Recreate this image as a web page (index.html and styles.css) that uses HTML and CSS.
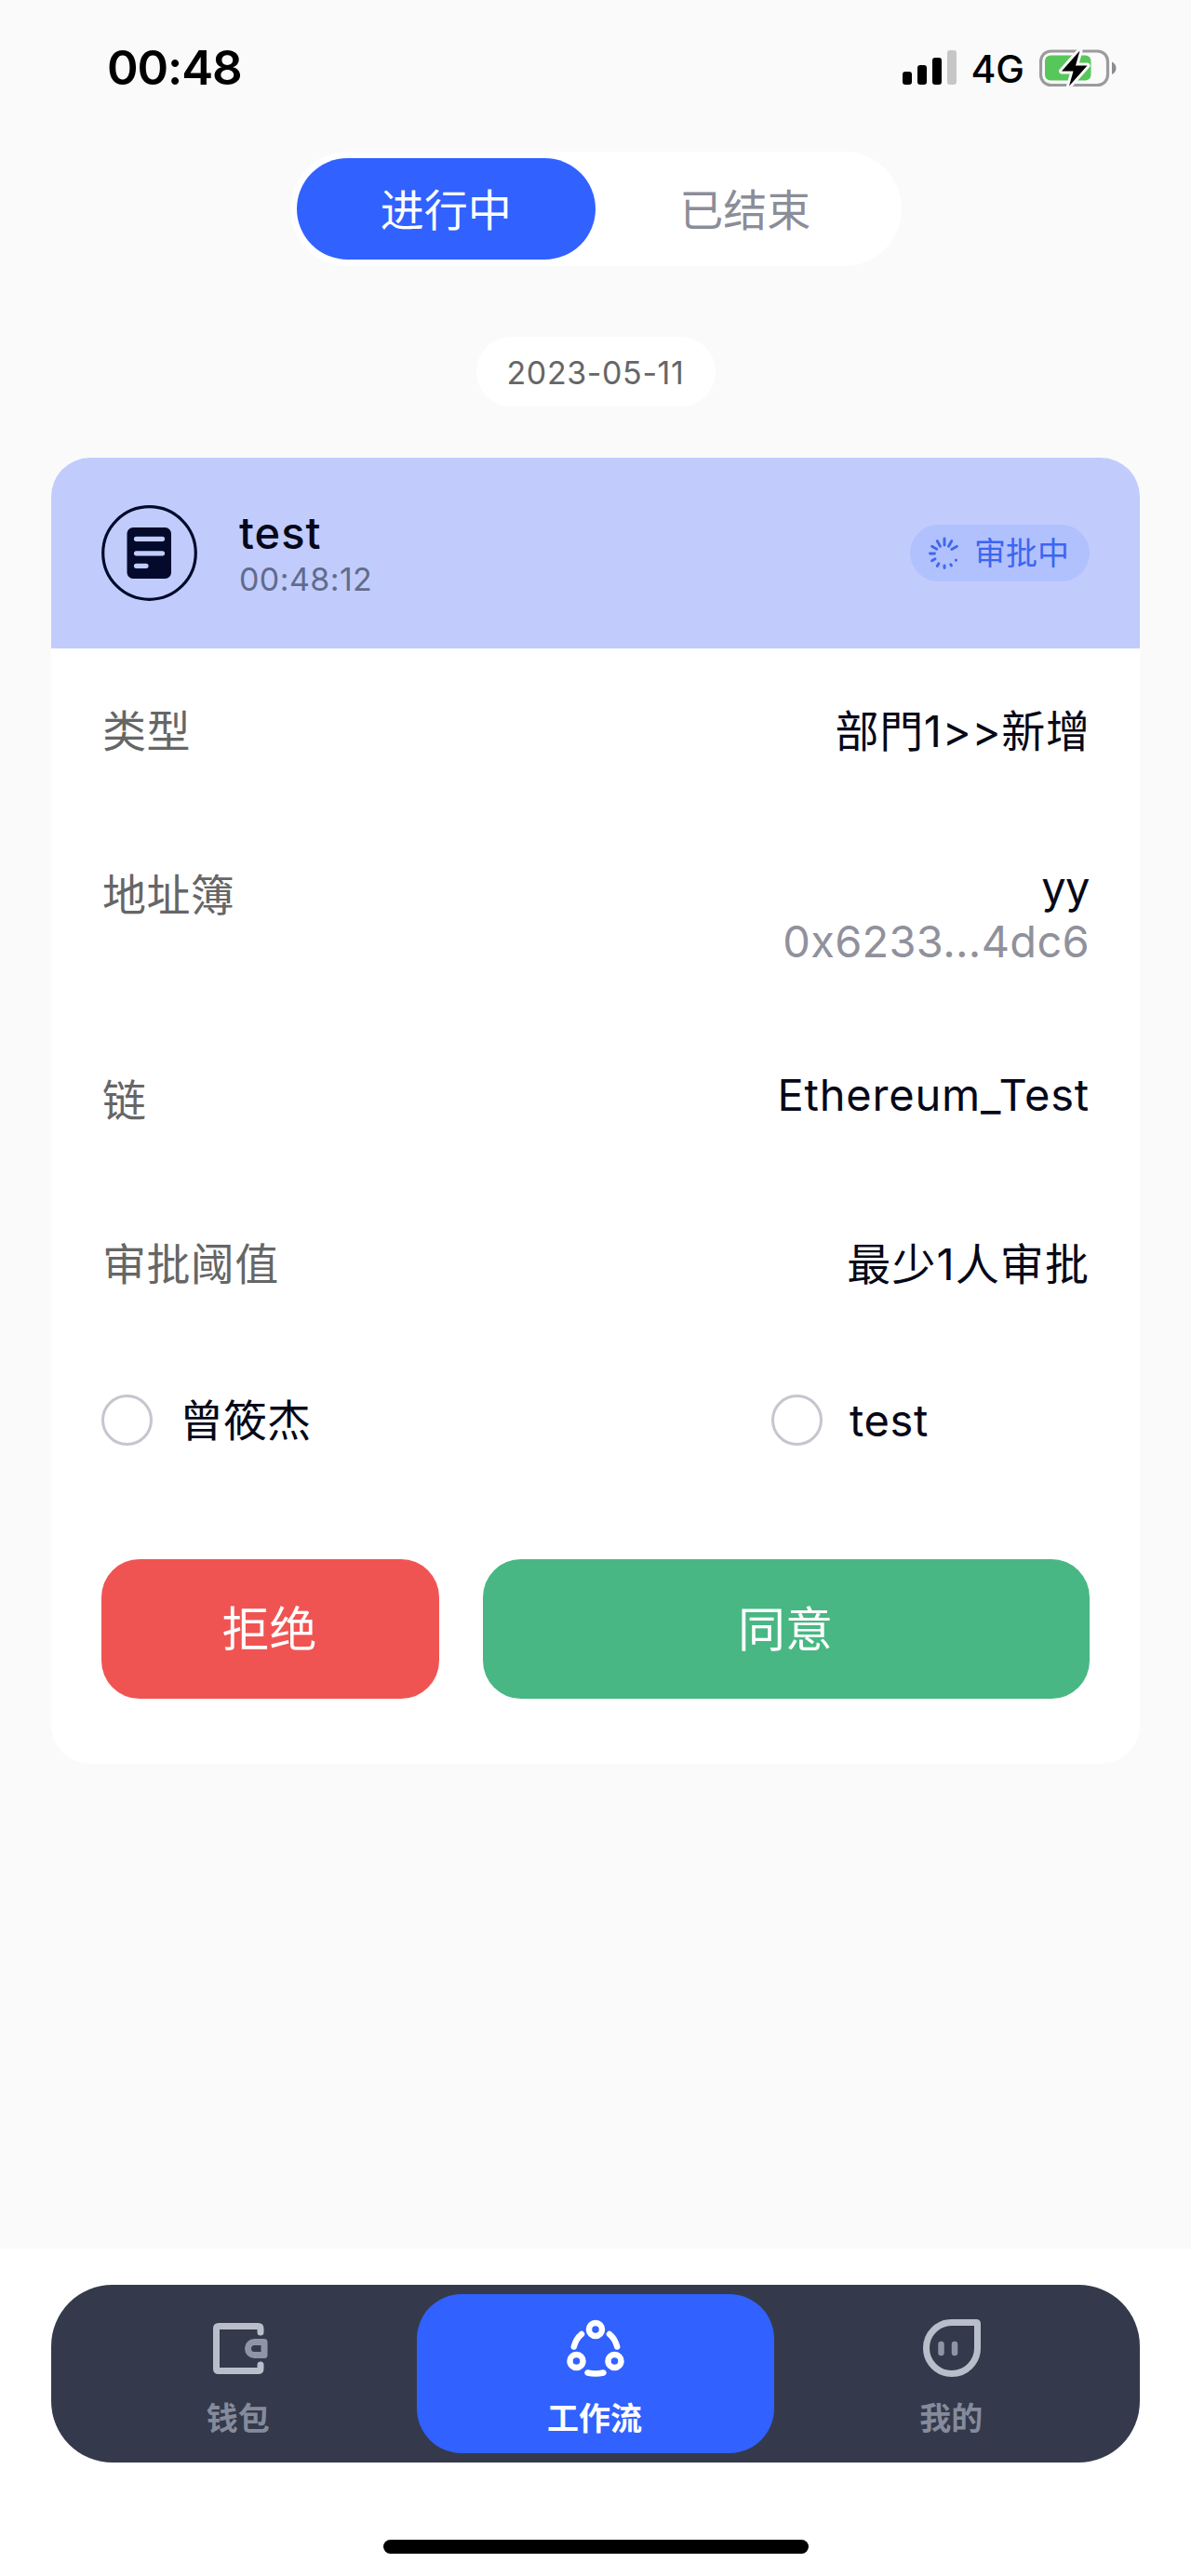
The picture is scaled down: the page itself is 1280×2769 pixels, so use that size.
FILE: index.html
```
<!DOCTYPE html>
<html lang="zh-CN">
<head>
<meta charset="utf-8">
<title>工作流</title>
<link rel="stylesheet" href="styles.css">
</head>
<body>
<div class="app">
  <header class="status-bar">
    <span class="clock">00:48</span>
    <div class="status-icons">
      <svg class="signal" width="58" height="37" viewBox="0 0 58 37">
        <rect x="0" y="23" width="10" height="14" rx="3"/>
        <rect x="16" y="16" width="10" height="21" rx="3"/>
        <rect x="32" y="8" width="10" height="29" rx="3"/>
        <rect x="48" y="0" width="10" height="37" rx="3" fill="#c6c6c6"/>
      </svg>
      <span class="network">4G</span>
      <svg class="battery" width="84" height="42" viewBox="0 0 84 42">
        <rect x="1.500" y="3" width="72" height="36.500" rx="11" fill="none" stroke="#9b9b9e" stroke-width="3.200"/>
        <path d="M78 14.500c6 2.500 6 11 0 13.500z" fill="#8c8c8f"/>
        <rect x="6" y="7.500" width="49.500" height="27" rx="6" fill="#57c75b"/>
        <path d="M43.500 2.500 24 24.500h12.500L32 40.500 51.500 18.500H39z" fill="#000" stroke="#fafafa" stroke-width="6" stroke-linejoin="round" paint-order="stroke"/>
      </svg>
    </div>
  </header>

  <main class="content">
    <div class="segmented">
      <div class="segment segment-active">进行中</div>
      <div class="segment">已结束</div>
    </div>

    <div class="date">2023-05-11</div>

    <section class="card">
      <div class="card-head">
        <svg class="doc-icon" width="103" height="103" viewBox="0 0 103 103">
          <circle cx="51.500" cy="51.500" r="49.800" fill="none" stroke="#030a2b" stroke-width="3.200"/>
          <rect x="27.500" y="24" width="47.500" height="55" rx="6.500" fill="#030a2b"/>
          <g stroke="#c1ccfd" stroke-width="5.200" stroke-linecap="round">
            <path d="M37.500 36.300h28M37.500 51.800h28M37.500 65.300h10.500"/>
          </g>
        </svg>
        <div class="card-title">
          <div class="name">test</div>
          <div class="time">00:48:12</div>
        </div>
        <div class="badge">
          <svg class="spinner" width="36" height="36" viewBox="-18 -18 36 36">
            <g stroke="#4067ee" stroke-width="2.900" stroke-linecap="round">
              <path d="M0-9V-16"/>
              <path d="M0-9V-15.500" transform="rotate(30)"/>
              <path d="M0-9V-15.500" transform="rotate(60)"/>
              <path d="M0-14.200V-14.500" transform="rotate(120)"/>
              <path d="M0-13.500V-15" transform="rotate(150)"/>
              <path d="M0-13V-15.500" transform="rotate(180)"/>
              <path d="M0-12.300V-15.500" transform="rotate(210)"/>
              <path d="M0-11.500V-15.500" transform="rotate(240)"/>
              <path d="M0-10.500V-15.500" transform="rotate(270)"/>
              <path d="M0-9.500V-15.500" transform="rotate(300)"/>
              <path d="M0-9V-15.500" transform="rotate(330)"/>
            </g>
          </svg>
          <span>审批中</span>
        </div>
      </div>

      <div class="card-body">
        <div class="row">
          <div class="label">类型</div>
          <div class="value type">部門1&gt;&gt;新增</div>
        </div>
        <div class="row row-address">
          <div class="label">地址簿</div>
          <div class="value-stack">
            <div class="value tight">yy</div>
            <div class="value muted">0x6233...4dc6</div>
          </div>
        </div>
        <div class="row row-chain">
          <div class="label">链</div>
          <div class="value chain">Ethereum_Test</div>
        </div>
        <div class="row row-threshold">
          <div class="label">审批阈值</div>
          <div class="value wide">最少1人审批</div>
        </div>
        <div class="approvers">
          <div class="approver"><span class="radio"></span><span>曾筱杰</span></div>
          <div class="approver approver-latin"><span class="radio"></span><span>test</span></div>
        </div>
        <div class="actions">
          <div class="button reject">拒绝</div>
          <div class="button approve">同意</div>
        </div>
      </div>
    </section>
  </main>

  <footer class="footer">
    <nav class="tabs">
      <div class="tab">
        <svg width="72" height="72" viewBox="0 0 72 72" fill="none" stroke-width="7" stroke-linecap="round" stroke-linejoin="round">
          <path d="M59 19v-4q0-2.500-2.500-2.500H14q-2.500 0-2.500 2.500v43q0 2.500 2.500 2.500h42.500q2.500 0 2.500-2.500v-4" stroke="#b9becb"/>
          <path d="M63 29.500H52.500a7 7 0 0 0 0 14H63z" stroke="#8f95a5"/>
        </svg>
        <span>钱包</span>
      </div>
      <div class="tab tab-active">
        <svg width="72" height="72" viewBox="0 0 72 72" fill="none" stroke="#fff" stroke-width="6.500" stroke-linecap="round">
          <circle cx="36" cy="16" r="7"/>
          <circle cx="15.500" cy="50" r="7"/>
          <circle cx="56.500" cy="50" r="7"/>
          <path d="M12.800 34.500Q15 26 21 21M59.200 34.500Q57 26 51 21M27.500 62.500q8.500 2 17 0"/>
        </svg>
        <span>工作流</span>
      </div>
      <div class="tab">
        <svg width="72" height="72" viewBox="0 0 72 72" fill="none" stroke-width="7" stroke-linecap="round" stroke-linejoin="round">
          <path d="M36 8.500H62q1.500 0 1.500 1.500V36a27.500 27.500 0 1 1-27.500-27.500z" stroke="#b9becb"/>
          <path d="M24.500 32v9M39 32v9" stroke="#8f95a5" stroke-width="6.500"/>
        </svg>
        <span>我的</span>
      </div>
    </nav>
    <div class="home-indicator"></div>
  </footer>
</div>
</body>
</html>
```
FILE: styles.css
```
* {
  box-sizing: border-box;
}

body {
  margin: 0;
  background: #fafafa;
  color: #060818;
  font-family: Inter, "Noto Sans CJK SC", sans-serif;
  font-size: 47px;
  line-height: 56px;
  white-space: nowrap;
}

svg {
  display: block;
  flex: none;
}

.app {
  display: flex;
  flex-direction: column;
  width: 1280px;
  height: 2769px;
}

/* Status bar */
.status-bar {
  display: flex;
  justify-content: space-between;
  align-items: center;
  height: 145px;
  padding: 0 79px 0 115px;
  color: #000;
}

.clock {
  font-size: 51px;
  font-weight: 600;
  letter-spacing: -1.1px;
}

.status-icons {
  display: flex;
  align-items: center;
}

.network {
  margin: 3px 16px 0 15px;
  font-size: 41px;
  font-weight: 500;
}

/* Content */
.content {
  display: flex;
  flex: 1;
  flex-direction: column;
  align-items: center;
  padding: 17.500px 55px 0;
}

.segmented {
  display: flex;
  width: 657px;
  height: 123px;
  padding: 7px;
  border-radius: 62px;
  background: #fff;
}

.segment {
  flex: 1;
  border-radius: 55px;
  color: #8b8d98;
  line-height: 111px;
  text-align: center;
}

.segment-active {
  background: #3161ff;
  color: #fff;
}

.date {
  width: 257px;
  height: 75px;
  margin-top: 76.500px;
  border-radius: 38px;
  background: #fff;
  color: #666;
  font-size: 34px;
  letter-spacing: 0.6px;
  line-height: 77px;
  text-align: center;
}

/* Approval card */
.card {
  overflow: hidden;
  width: 1170px;
  height: 1404px;
  margin-top: 55px;
  border-radius: 42px;
  background: #fff;
}

.card-head {
  display: flex;
  align-items: center;
  height: 205px;
  padding: 0 54px;
  background: #c1ccfd;
}

.card-title {
  flex: 1;
  padding-left: 45px;
}

.name {
  font-weight: 500;
  letter-spacing: 1px;
  line-height: 56px;
}

.time {
  color: #616b8c;
  font-size: 34px;
  letter-spacing: 0.4px;
  line-height: 44px;
}

.badge {
  display: flex;
  align-items: center;
  gap: 14px;
  width: 193px;
  height: 61px;
  padding-left: 19px;
  border-radius: 31px;
  background: #b1c1fd;
  color: #3d65f0;
  font-size: 34px;
}

.badge span {
  padding-top: 1px;
}

.card-body {
  display: flex;
  flex-direction: column;
  padding: 61px 54px 0;
}

.row {
  display: flex;
  justify-content: space-between;
  margin-bottom: 108px;
}

.row-address {
  margin-bottom: 107px;
}

.row-address .label {
  padding-top: 12px;
}

.row-chain {
  margin-bottom: 120px;
}

.row-chain .label {
  padding-top: 6px;
}

.row-threshold {
  margin-bottom: 112px;
}

.label {
  padding-left: 1px;
  color: #666;
  letter-spacing: 0.4px;
}

.value {
  text-align: right;
}

.value-stack .value {
  line-height: 60px;
}

.type {
  margin-right: -0.7px;
  letter-spacing: 0.7px;
}

.wide {
  letter-spacing: 1.1px;
}

.value-stack .tight {
  padding-top: 3px;
  letter-spacing: -0.5px;
  line-height: 57px;
}

.muted {
  color: #90919c;
  letter-spacing: 0.3px;
}

.chain {
  letter-spacing: 0.8px;
}

.approvers {
  display: grid;
  grid-template-columns: 720px 1fr;
}

.approver {
  display: flex;
  align-items: center;
  gap: 29px;
  height: 55px;
}

.approver-latin {
  letter-spacing: 0.6px;
}

.radio {
  width: 55px;
  height: 55px;
  border: 3.500px solid #c5c6ce;
  border-radius: 50%;
}

.actions {
  display: flex;
  gap: 47px;
  margin-top: 122px;
}

.button {
  height: 150px;
  border-radius: 41px;
  color: #fff;
  font-size: 51px;
  line-height: 151px;
  text-align: center;
}

.reject {
  width: 363px;
  padding-right: 2px;
  background: #f05452;
}

.approve {
  flex: 1;
  padding-right: 2px;
  background: #48b784;
}

/* Bottom navigation */
.footer {
  display: flex;
  flex-direction: column;
  align-items: center;
  height: 352px;
  padding-top: 39px;
  background: #fff;
}

.tabs {
  display: flex;
  width: 1170px;
  height: 191px;
  padding: 10px;
  border-radius: 66px;
  background: #343a4b;
}

.tab {
  display: flex;
  flex: 1;
  flex-direction: column;
  align-items: center;
  padding-top: 22px;
  border-radius: 48px;
  color: #858b9b;
  font-size: 34px;
  font-weight: 600;
  line-height: 40px;
}

.tab span {
  margin-top: 20px;
  padding-right: 2px;
}

.tab-active {
  background: #3161ff;
  color: #fff;
  font-weight: 700;
}

.home-indicator {
  width: 457px;
  height: 15px;
  margin-top: 83px;
  border-radius: 8px;
  background: #000;
}
```
